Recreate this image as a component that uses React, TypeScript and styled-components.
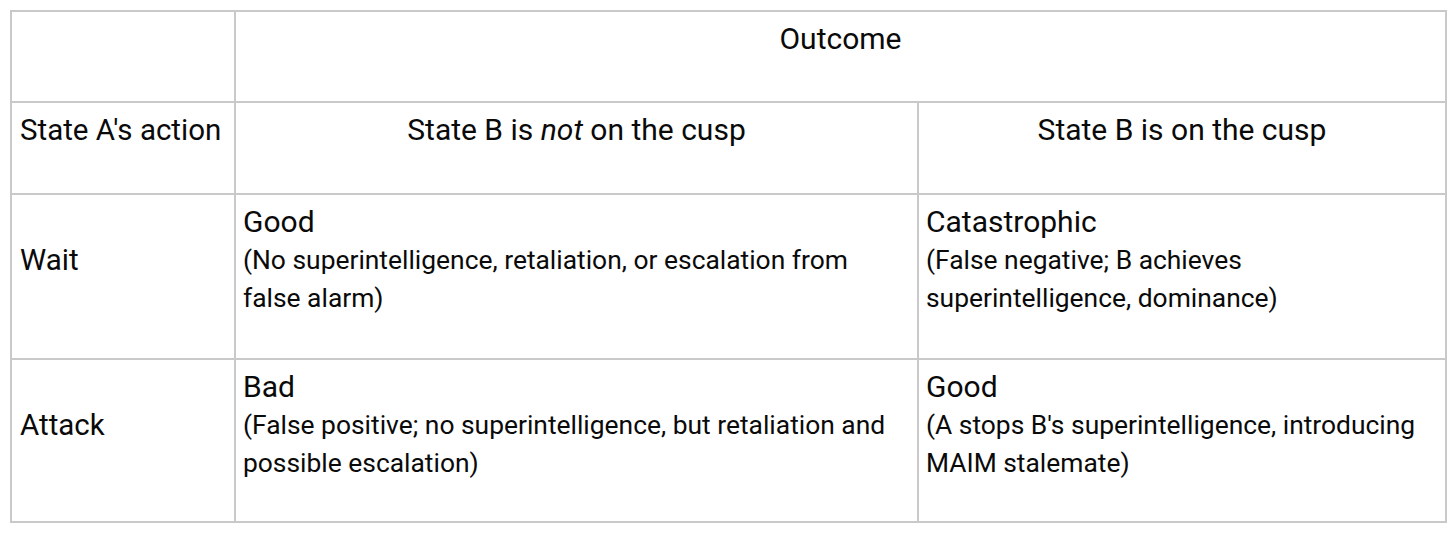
import React from "react";
import styled, { createGlobalStyle } from "styled-components";

const Global = createGlobalStyle`
  html, body { margin: 0; padding: 0; background: #ffffff; }
  body { font-family: Roboto, "Noto Sans", Arial, sans-serif; color: #000; }
`;

const Page = styled.div`
  padding: 10px;
`;

const Table = styled.table`
  border-collapse: collapse;
  table-layout: fixed;
  width: 1435px;
  font-family: Roboto, "Noto Sans", Arial, sans-serif;
  font-size: 30px;
  line-height: 38px;
  color: #0a0a0a;
`;

const Cell = styled.td<{ $align?: "left" | "center"; $pb?: number }>`
  border: 2px solid #c9c9c9;
  padding: 8px 7px ${(p) => p.$pb ?? 41}px 7px;
  text-align: ${(p) => p.$align ?? "left"};
  vertical-align: top;
`;

const Label = styled.td<{ $pb?: number }>`
  border: 2px solid #c9c9c9;
  padding: 8px 8px ${(p) => p.$pb ?? 41}px 8px;
  font-size: 29.5px;
  vertical-align: middle;
`;

const Title = styled.div`
  font-size: 30px;
`;

const Note = styled.div`
  font-size: 26.4px;
`;

type Result = { title: string; note: string };

const rows: { action: string; a: Result; b: Result; pb: number }[] = [
  {
    action: "Wait",
    a: {
      title: "Good",
      note: "(No superintelligence, retaliation, or escalation from false alarm)",
    },
    b: {
      title: "Catastrophic",
      note: "(False negative; B achieves superintelligence, dominance)",
    },
    pb: 41,
  },
  {
    action: "Attack",
    a: {
      title: "Bad",
      note: "(False positive; no superintelligence, but retaliation and possible escalation)",
    },
    b: {
      title: "Good",
      note: "(A stops B's superintelligence, introducing MAIM stalemate)",
    },
    pb: 39,
  },
];

export default function App() {
  return (
    <Page>
      <Global />
      <Table>
        <colgroup>
          <col style={{ width: 224 }} />
          <col style={{ width: 683 }} />
          <col style={{ width: 528 }} />
        </colgroup>
        <tbody>
          <tr>
            <Cell $pb={43}></Cell>
            <Cell colSpan={2} $align="center" $pb={43}>
              Outcome
            </Cell>
          </tr>
          <tr>
            <Label $pb={44}>State A's action</Label>
            <Cell $align="center" $pb={44}>
              State B is <em>not</em> on the cusp
            </Cell>
            <Cell $align="center" $pb={44}>
              State B is on the cusp
            </Cell>
          </tr>
          {rows.map((r) => (
            <tr key={r.action}>
              <Label $pb={r.pb}>{r.action}</Label>
              <Cell $pb={r.pb}>
                <Title>{r.a.title}</Title>
                <Note>{r.a.note}</Note>
              </Cell>
              <Cell $pb={r.pb}>
                <Title>{r.b.title}</Title>
                <Note>{r.b.note}</Note>
              </Cell>
            </tr>
          ))}
        </tbody>
      </Table>
    </Page>
  );
}
